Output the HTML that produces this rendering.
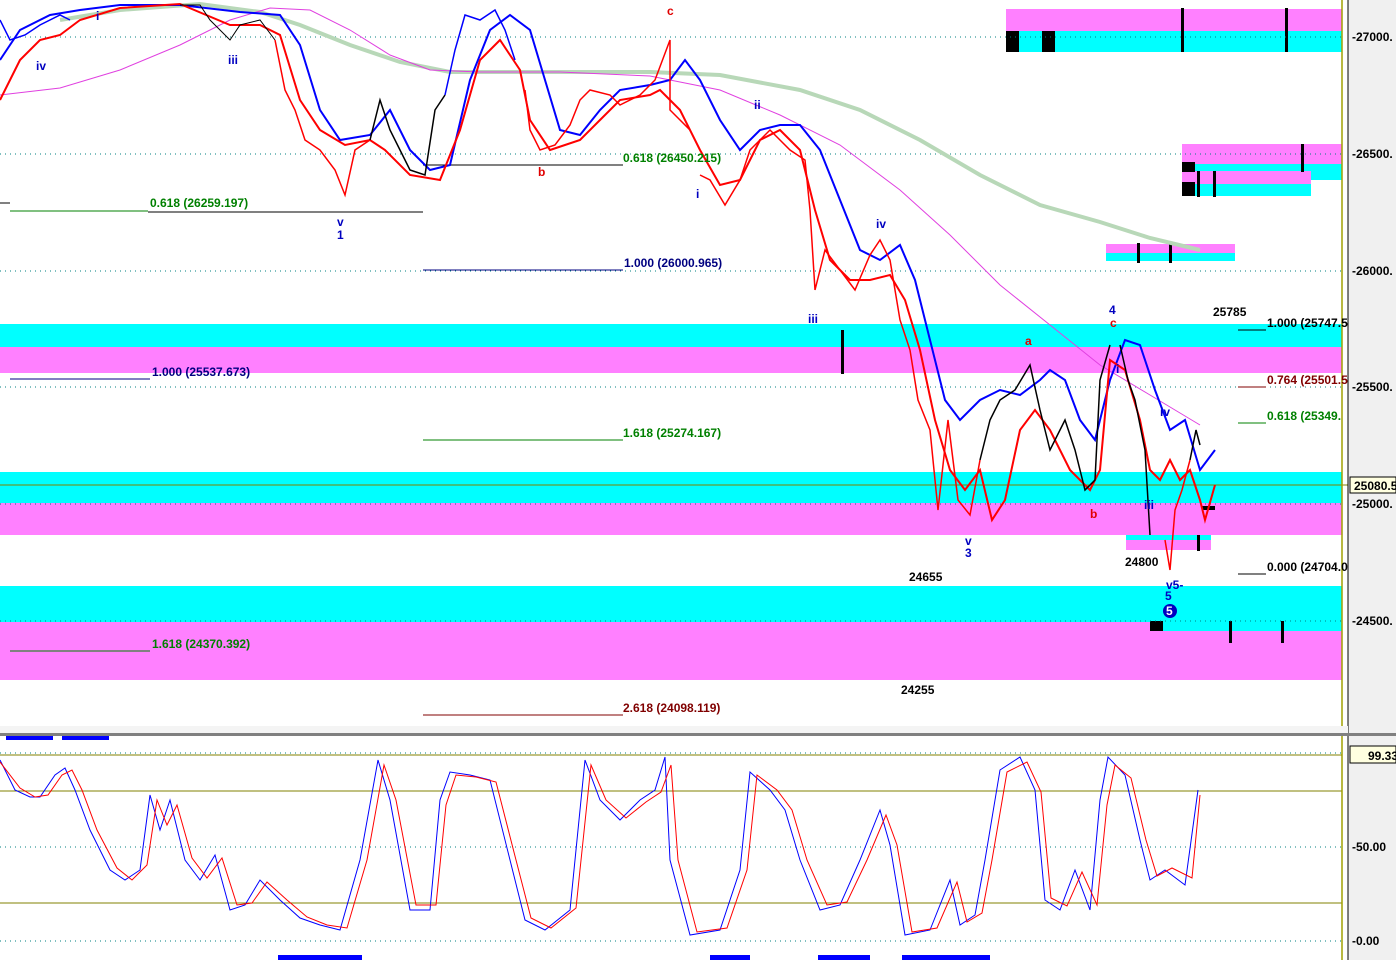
<!DOCTYPE html>
<html><head><meta charset="utf-8"><style>
html,body{margin:0;padding:0;background:#fff;width:1396px;height:960px;overflow:hidden}
svg{display:block}
text{font-family:"Liberation Sans",sans-serif;font-size:12px;font-weight:bold}
</style></head><body>
<svg width="1396" height="960" viewBox="0 0 1396 960">
<rect width="1396" height="960" fill="#fff"/>
<!-- bands -->
<rect x="0" y="324" width="1342" height="23" fill="#00ffff"/>
<rect x="0" y="347" width="1342" height="26" fill="#ff80ff"/>
<rect x="0" y="472" width="1342" height="31" fill="#00ffff"/>
<rect x="0" y="503" width="1342" height="32" fill="#ff80ff"/>
<rect x="0" y="586" width="1342" height="36" fill="#00ffff"/>
<rect x="0" y="622" width="1342" height="58" fill="#ff80ff"/>
<rect x="1160" y="622" width="182" height="9" fill="#00ffff"/>
<rect x="1006" y="9" width="336" height="22" fill="#ff80ff"/>
<rect x="1006" y="31" width="336" height="21" fill="#00ffff"/>
<rect x="1182" y="144" width="160" height="20" fill="#ff80ff"/>
<rect x="1182" y="164" width="160" height="16" fill="#00ffff"/>
<rect x="1182" y="171" width="129" height="13" fill="#ff80ff"/>
<rect x="1182" y="184" width="129" height="12" fill="#00ffff"/>
<rect x="1106" y="244" width="129" height="9" fill="#ff80ff"/>
<rect x="1106" y="253" width="129" height="8" fill="#00ffff"/>
<rect x="1126" y="535" width="85" height="5" fill="#00ffff"/>
<rect x="1126" y="540" width="85" height="10" fill="#ff80ff"/>
<!-- black marks -->
<g fill="#000">
<rect x="1006" y="31" width="13" height="21"/><rect x="1042" y="31" width="13" height="21"/>
<rect x="1181" y="8" width="3" height="44"/><rect x="1285" y="8" width="3" height="44"/>
<rect x="1301" y="144" width="3" height="28"/><rect x="1182" y="162" width="13" height="10"/><rect x="1182" y="182" width="13" height="14"/>
<rect x="1197" y="171" width="3" height="26"/><rect x="1213" y="171" width="3" height="26"/>
<rect x="1137" y="243" width="3" height="20"/><rect x="1169" y="243" width="3" height="20"/>
<rect x="841" y="330" width="3" height="44"/>
<rect x="1150" y="621" width="13" height="10"/><rect x="1229" y="621" width="3" height="22"/><rect x="1281" y="621" width="3" height="22"/>
<rect x="1197" y="535" width="3" height="16"/><rect x="1202" y="506" width="13" height="4"/>
</g>
<!-- horizontal thin lines -->
<line x1="0" y1="485" x2="1348" y2="485" stroke="#808000" stroke-width="1"/>
<line x1="1342" y1="0" x2="1342" y2="733" stroke="#a0a000" stroke-width="1.5"/>
<g stroke-dasharray="1,4" stroke="#008080">
<line x1="0" y1="37" x2="1342" y2="37"/><line x1="0" y1="154" x2="1342" y2="154"/><line x1="0" y1="271" x2="1342" y2="271"/><line x1="0" y1="387" x2="1342" y2="387"/><line x1="0" y1="504" x2="1342" y2="504"/><line x1="0" y1="621" x2="1342" y2="621"/>
</g>
<!-- fib lines -->
<g stroke-width="1">
<line x1="10" y1="211" x2="148" y2="211" stroke="#008000"/><line x1="148" y1="212" x2="423" y2="212" stroke="#000"/>
<line x1="423" y1="165" x2="623" y2="165" stroke="#000"/>
<line x1="423" y1="270" x2="623" y2="270" stroke="#000080"/>
<line x1="10" y1="379" x2="150" y2="379" stroke="#000080"/>
<line x1="423" y1="440" x2="623" y2="440" stroke="#008000"/>
<line x1="10" y1="651" x2="150" y2="651" stroke="#008000"/>
<line x1="423" y1="715" x2="623" y2="715" stroke="#800000"/>
<line x1="1238" y1="330" x2="1266" y2="330" stroke="#000"/>
<line x1="1238" y1="387" x2="1266" y2="387" stroke="#800000"/>
<line x1="1238" y1="423" x2="1266" y2="423" stroke="#008000"/>
<line x1="1238" y1="574" x2="1266" y2="574" stroke="#000"/>
<line x1="0" y1="203" x2="10" y2="203" stroke="#000"/>
</g>
<!-- moving averages -->
<polyline fill="none" stroke="#b8d8b8" stroke-width="4" points="60,20 120,10 200,4 260,12 300,25 350,45 400,62 450,72 550,72 650,72 720,75 800,90 860,110 920,140 980,175 1040,205 1100,222 1150,238 1200,250"/>
<polyline fill="none" stroke="#e040e0" stroke-width="1" points="0,95 60,88 120,70 180,45 230,20 270,8 310,10 350,30 390,55 430,70 480,72 560,72 650,76 720,90 780,115 840,145 900,190 950,235 1000,285 1050,325 1100,365 1150,395 1200,425"/>
<polyline fill="none" stroke="#0000ff" stroke-width="2" points="0,60 20,30 50,15 80,10 120,5 180,5 240,12 280,15 300,45 320,110 340,140 370,135 390,110 410,150 430,170 450,165 470,80 490,30 510,15 530,30 545,80 560,130 580,135 600,110 620,90 650,85 670,80 685,60 700,80 720,120 740,150 760,130 780,125 800,125 820,150 840,200 860,250 880,260 900,245 915,280 930,340 945,400 960,420 980,400 1000,390 1020,395 1040,380 1050,370 1065,380 1080,420 1095,440 1110,380 1125,340 1140,345 1155,390 1170,430 1185,420 1200,470 1215,450"/>
<polyline fill="none" stroke="#ff0000" stroke-width="2" points="0,100 20,60 40,40 60,35 80,20 120,8 180,4 230,25 260,25 280,35 300,100 320,130 345,145 370,140 385,150 410,175 440,180 460,130 480,60 500,40 520,70 530,120 550,150 580,140 600,120 620,100 650,95 660,90 680,110 700,150 720,185 740,180 760,140 780,130 800,150 815,210 830,260 850,280 870,280 890,275 905,300 920,350 935,420 950,470 965,490 980,470 992,520 1005,500 1020,430 1035,410 1050,430 1070,470 1090,490 1100,470 1110,360 1125,370 1140,420 1150,470 1160,480 1170,460 1180,480 1190,470 1200,500 1205,520 1215,485"/>
<!-- candle path approximations -->
<polyline fill="none" stroke="#000" stroke-width="1" points="180,5 200,5 210,20 230,40 240,25 260,20 275,40"/>
<polyline fill="none" stroke="#ff0000" stroke-width="1.5" points="275,40 285,90 295,110 305,140 320,150 335,170 345,195 355,150 370,140"/>
<polyline fill="none" stroke="#000" stroke-width="1.5" points="370,140 380,100 390,130 400,150 410,170 425,175 435,110 445,95"/>
<polyline fill="none" stroke="#0000ff" stroke-width="1.5" points="445,95 455,50 465,15 480,20 495,10 505,30 515,60"/>
<polyline fill="none" stroke="#ff0000" stroke-width="1.5" points="525,90 530,130 540,150 555,145 570,125 580,100 590,90 610,95 620,105 640,95 655,80 670,40 670,110 690,130"/>
<polyline fill="none" stroke="#ff0000" stroke-width="1.5" points="700,175 710,180 725,205 740,180 750,150 770,130 790,150 805,160 810,210 815,290 825,250 840,270 855,290 870,255 880,240 890,260 900,320 910,350 918,400 930,430 938,510 948,420 958,500 970,515 980,460"/>
<polyline fill="none" stroke="#000" stroke-width="1.5" points="980,460 990,420 1000,400 1015,390 1030,365 1040,410 1050,450 1065,420 1075,450 1085,490 1095,480 1100,380 1110,345"/>
<polyline fill="none" stroke="#000" stroke-width="1.5" points="1120,345 1128,380 1135,400 1145,450 1150,535"/>
<polyline fill="none" stroke="#ff0000" stroke-width="1.5" points="1165,540 1170,570 1175,510 1182,490 1190,460"/>
<polyline fill="none" stroke="#000" stroke-width="1.5" points="1190,460 1196,430 1200,445"/>
<polyline fill="none" stroke="#0000ff" stroke-width="1.5" points="0,20 10,40 25,35 40,25 60,15 70,20"/>
<!-- labels -->
<g>
<text x="150" y="207" fill="#008000">0.618 (26259.197)</text>
<text x="623" y="162" fill="#008000">0.618 (26450.215)</text>
<text x="624" y="267" fill="#000080">1.000 (26000.965)</text>
<text x="152" y="376" fill="#000080">1.000 (25537.673)</text>
<text x="623" y="437" fill="#008000">1.618 (25274.167)</text>
<text x="152" y="648" fill="#008000">1.618 (24370.392)</text>
<text x="623" y="712" fill="#800000">2.618 (24098.119)</text>
<text x="1267" y="327" fill="#000">1.000 (25747.5</text>
<text x="1267" y="384" fill="#800000">0.764 (25501.5</text>
<text x="1267" y="420" fill="#008000">0.618 (25349.</text>
<text x="1267" y="571" fill="#000">0.000 (24704.0</text>
<text x="1213" y="316" fill="#000">25785</text>
<text x="1125" y="566" fill="#000">24800</text>
<text x="909" y="581" fill="#000">24655</text>
<text x="901" y="694" fill="#000">24255</text>
<g fill="#0000c0">
<text x="36" y="70">iv</text><text x="96" y="20">i</text><text x="228" y="64">iii</text><text x="337" y="226">v</text><text x="337" y="239">1</text>
<text x="754" y="109">ii</text><text x="696" y="198">i</text><text x="808" y="323">iii</text><text x="876" y="228">iv</text>
<text x="965" y="545">v</text><text x="965" y="557">3</text><text x="1109" y="314">4</text><text x="1116" y="373">i</text><text x="1144" y="509">iii</text>
<text x="1160" y="416">iv</text><text x="1166" y="589">v5-</text><text x="1165" y="600">5</text>
</g>
<g fill="#e00000"><text x="667" y="15">c</text><text x="538" y="176">b</text><text x="1025" y="345">a</text><text x="1110" y="327">c</text><text x="1090" y="518">b</text></g>
<circle cx="1170" cy="611" r="7" fill="#0000c0"/><text x="1166" y="615" fill="#fff" font-size="11">5</text>
</g>
<!-- right axis -->
<rect x="1348" y="0" width="48" height="960" fill="#f0f0f0"/>
<line x1="1348" y1="0" x2="1348" y2="960" stroke="#000"/>
<g fill="#000" font-size="12">
<text x="1352" y="41">-27000.</text><text x="1352" y="158">-26500.</text><text x="1352" y="275">-26000.</text><text x="1352" y="391">-25500.</text><text x="1352" y="508">-25000.</text><text x="1352" y="625">-24500.</text>
<text x="1352" y="851">-50.00</text><text x="1352" y="945">-0.00</text>
</g>
<rect x="1350" y="477" width="46" height="16" fill="#ffffe0" stroke="#000"/><text x="1354" y="490">25080.5</text>
<rect x="1350" y="746" width="46" height="17" fill="#ffffe0" stroke="#000"/><text x="1368" y="760">99.33</text>
<!-- separator -->
<rect x="0" y="726" width="1348" height="7" fill="#f4f4f4"/>
<rect x="0" y="733" width="1396" height="3" fill="#808080"/>
<!-- lower panel -->
<line x1="0" y1="755" x2="1342" y2="755" stroke="#808000"/>
<line x1="0" y1="791" x2="1342" y2="791" stroke="#808000"/>
<line x1="0" y1="903" x2="1342" y2="903" stroke="#808000"/>
<g stroke-dasharray="1,4" stroke="#008080"><line x1="0" y1="753" x2="1342" y2="753"/><line x1="0" y1="847" x2="1342" y2="847"/><line x1="0" y1="941" x2="1342" y2="941"/></g>
<line x1="1342" y1="736" x2="1342" y2="960" stroke="#a0a000" stroke-width="1.5"/>
<rect x="6" y="736" width="47" height="4" fill="#0000ff"/><rect x="62" y="736" width="47" height="4" fill="#0000ff"/>
<rect x="278" y="955" width="84" height="5" fill="#0000ff"/><rect x="710" y="955" width="40" height="5" fill="#0000ff"/><rect x="818" y="955" width="52" height="5" fill="#0000ff"/><rect x="902" y="955" width="88" height="5" fill="#0000ff"/>
<polyline fill="none" stroke="#0000ff" stroke-width="1" points="0,760 15,790 30,797 40,797 55,775 65,768 75,790 90,830 110,870 125,880 140,870 150,795 160,830 170,800 185,860 200,880 215,855 230,910 245,905 260,880 280,900 300,918 320,925 340,930 360,860 378,760 390,800 410,910 430,910 440,800 450,772 470,775 490,780 510,860 525,920 545,930 570,910 585,760 600,800 620,820 640,800 655,790 665,757 670,860 690,935 720,930 740,870 750,772 770,790 785,810 800,860 820,910 840,905 860,860 880,810 890,845 905,935 930,930 950,880 960,925 975,915 985,860 1000,770 1020,757 1035,790 1045,900 1060,910 1075,870 1090,910 1100,800 1108,757 1125,775 1140,840 1150,880 1165,870 1185,885 1198,790"/>
<polyline fill="none" stroke="#ff0000" stroke-width="1" points="0,762 20,788 35,797 48,795 62,775 72,770 82,790 97,830 117,868 132,880 147,865 157,800 167,825 177,805 192,858 207,878 222,858 237,905 252,903 267,882 287,900 307,917 327,925 347,928 367,860 384,765 396,800 416,905 436,905 446,805 456,775 476,777 496,782 516,860 531,918 551,928 576,908 591,765 606,800 626,818 646,802 661,792 671,765 678,860 697,932 727,928 747,870 757,775 777,790 792,810 807,860 827,905 847,902 867,860 886,815 897,845 912,932 937,928 957,882 967,922 982,913 992,860 1007,772 1027,762 1041,792 1051,898 1067,906 1082,872 1097,905 1107,805 1115,765 1131,778 1146,840 1157,876 1172,868 1192,878 1200,795"/>
</svg>
</body></html>
